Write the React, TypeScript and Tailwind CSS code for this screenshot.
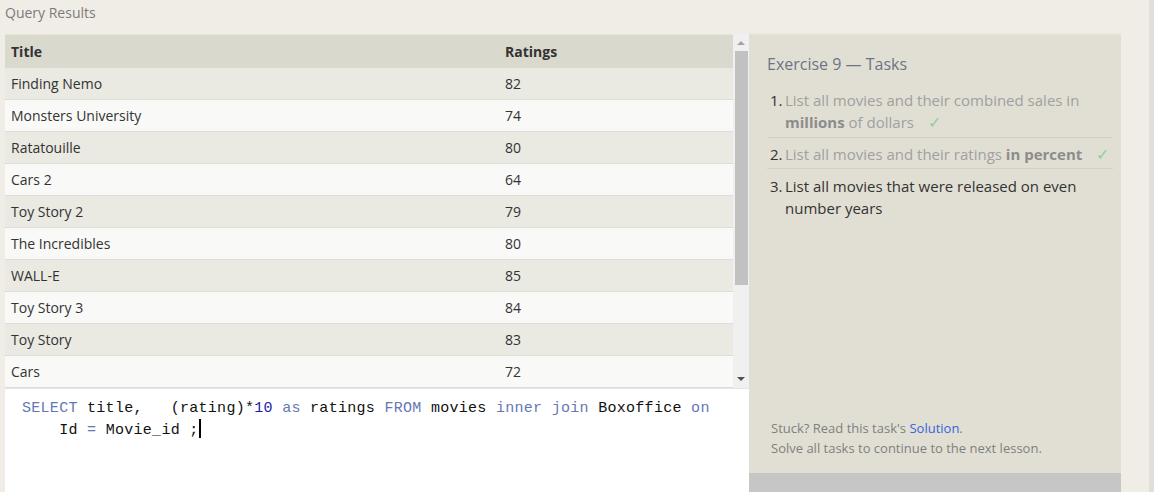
import React from "react";

const rows: [string, number][] = [
  ["Finding Nemo", 82],
  ["Monsters University", 74],
  ["Ratatouille", 80],
  ["Cars 2", 64],
  ["Toy Story 2", 79],
  ["The Incredibles", 80],
  ["WALL-E", 85],
  ["Toy Story 3", 84],
  ["Toy Story", 83],
  ["Cars", 72],
];

const sans = { fontFamily: '"Open Sans", "Noto Sans", sans-serif' };

function Check() {
  return <span className="ml-[14px] text-[16px] text-[#8dd098]">✓</span>;
}

export default function App() {
  return (
    <div
      className="w-[1154px] h-[492px] bg-[#f0ede6] flex overflow-hidden"
      style={sans}
    >
      {/* left column */}
      <div className="w-[749px] pl-[5px] flex flex-col">
        <div className="h-[34px] flex items-start pt-[2px] text-[14px] text-[#7b7b7b]">
          Query Results
        </div>
        <div className="h-[354px] flex">
          <div className="w-[728px] flex flex-col text-[14px] text-[#333]">
            <div className="h-[34px] bg-[#dad9cd] flex items-center font-bold text-[#333] border-t border-[#e6e4dc]">
              <div className="w-[500px] pl-[6px]">Title</div>
              <div>Ratings</div>
            </div>
            {rows.map(([t, r], i) => (
              <div
                key={t}
                className={`h-[32px] shrink-0 flex items-center border-b border-[#dddcd6] ${
                  i % 2 === 0 ? "bg-[#eae9e2]" : "bg-[#f9f9f8]"
                }`}
              >
                <div className="w-[500px] pl-[6px]">{t}</div>
                <div>{r}</div>
              </div>
            ))}
          </div>
          <div className="w-[16px] bg-[#f0f0f0] flex flex-col items-center">
            <div className="h-[17px] flex items-center justify-center">
              <div className="w-0 h-0 border-l-[4px] border-r-[4px] border-b-[4px] border-l-transparent border-r-transparent border-b-[#a3a3a3]" />
            </div>
            <div className="w-[13px] h-[234px] bg-[#c1c1c1]" />
            <div className="flex-1 flex items-end justify-center pb-[7px]">
              <div className="w-0 h-0 border-l-[4px] border-r-[4px] border-t-[4px] border-l-transparent border-r-transparent border-t-[#505050]" />
            </div>
          </div>
        </div>
        <div
          className="flex-1 bg-white border-t border-[#e4e4e4] pl-[17px] pt-[9px] text-[15px] leading-[21px] text-[#111] whitespace-pre"
          style={{ fontFamily: '"Liberation Mono", "DejaVu Sans Mono", monospace', letterSpacing: "0.29px" }}
        >
          <div>
            <span className="text-[#6577b5]">SELECT</span> title,   (rating)*
            <span className="text-[#1c1ca8]">10</span>{" "}
            <span className="text-[#6577b5]">as</span> ratings{" "}
            <span className="text-[#6577b5]">FROM</span> movies{" "}
            <span className="text-[#6577b5]">inner</span>{" "}
            <span className="text-[#6577b5]">join</span> Boxoffice{" "}
            <span className="text-[#6577b5]">on</span>
          </div>
          <div>
            {"    "}Id <span className="text-[#6577b5]">=</span> Movie_id ;
            <span className="inline-block w-[2px] h-[19px] bg-black align-[-4px]" />
          </div>
        </div>
      </div>

      {/* right panel */}
      <div className="w-[372px] mt-[33px] flex flex-col bg-[#e1dfd4] border-t-2 border-[#e6e6da]">
        <div className="flex-1 flex flex-col pl-[18px] pr-[8px]">
          <div className="mt-[18px] text-[16px] leading-[22px] text-[#6c7585]">Exercise 9 — Tasks</div>
          <ol className="mt-[14px] text-[15px] leading-[22px]">
            <li className="flex pb-[4px] border-b border-[#d3d1c7]">
              <span className="w-[18px] pl-[3px] text-[#333] shrink-0">1.</span>
              <span className="text-[#a0a0a0]">
                List all movies and their combined sales in{" "}
                <b className="text-[#8c8c8c]">millions</b> of dollars
                <Check />
              </span>
            </li>
            <li className="flex pt-[5px] pb-[3px] border-b border-[#d3d1c7]">
              <span className="w-[18px] pl-[3px] text-[#333] shrink-0">2.</span>
              <span className="text-[#a0a0a0]">
                List all movies and their ratings{" "}
                <b className="text-[#8c8c8c]">in percent</b>
                <Check />
              </span>
            </li>
            <li className="flex pt-[6px]">
              <span className="w-[18px] pl-[3px] text-[#333] shrink-0">3.</span>
              <span className="text-[#333]">
                List all movies that were released on even
                <br />
                number years
              </span>
            </li>
          </ol>
          <div className="mt-auto mb-[15px] pl-[4px] text-[13px] leading-[20px] text-[#7f7f7f]">
            <div>
              Stuck? Read this task's <span className="text-[#3366dd]">Solution</span>.
            </div>
            <div>Solve all tasks to continue to the next lesson.</div>
          </div>
        </div>
        <div className="h-[19px] bg-[#c6c6c6]" />
      </div>

      <div className="w-[28px]" />
      <div className="w-[5px] bg-[#e2dfdb]" />
    </div>
  );
}
